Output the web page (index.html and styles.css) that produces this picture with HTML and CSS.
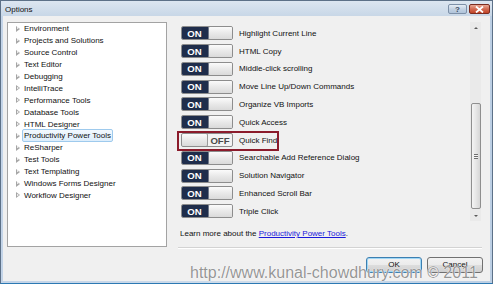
FILE: index.html
```html
<!DOCTYPE html>
<html lang="en">
<head>
  <meta charset="UTF-8" />
  <meta name="viewport" content="width=device-width, initial-scale=1.0">
  <title>Options</title>

  <link rel="stylesheet" href="styles.css">
</head>

<body>

  <div class="window">
    <div class="titlebar">
      <span class="title">Options</span>
      <div class="caption-buttons">
        <div class="cap-btn help">?</div>
        <div class="cap-btn close">
          <svg width="9" height="7" viewBox="0 0 9 7"><path d="M1 0.5 L8 6.5 M8 0.5 L1 6.5" stroke="#fff" stroke-width="1.8"/></svg>
        </div>
      </div>
    </div>

    <div class="client">
      <ul class="tree">
        <li><span class="arrow"></span><span class="node">Environment</span></li>
        <li><span class="arrow"></span><span class="node">Projects and Solutions</span></li>
        <li><span class="arrow"></span><span class="node">Source Control</span></li>
        <li><span class="arrow"></span><span class="node">Text Editor</span></li>
        <li><span class="arrow"></span><span class="node">Debugging</span></li>
        <li><span class="arrow"></span><span class="node">IntelliTrace</span></li>
        <li><span class="arrow"></span><span class="node">Performance Tools</span></li>
        <li><span class="arrow"></span><span class="node">Database Tools</span></li>
        <li><span class="arrow"></span><span class="node">HTML Designer</span></li>
        <li><span class="arrow"></span><span class="node selected">Productivity Power Tools</span></li>
        <li><span class="arrow"></span><span class="node">ReSharper</span></li>
        <li><span class="arrow"></span><span class="node">Test Tools</span></li>
        <li><span class="arrow"></span><span class="node">Text Templating</span></li>
        <li><span class="arrow"></span><span class="node">Windows Forms Designer</span></li>
        <li><span class="arrow"></span><span class="node">Workflow Designer</span></li>
      </ul>

      <div class="pane">
        <div class="settings">
          <ul class="toggles">
            <li class="row"><span class="switch on"><b>ON</b><i></i></span>Highlight Current Line</li>
            <li class="row"><span class="switch on"><b>ON</b><i></i></span>HTML Copy</li>
            <li class="row"><span class="switch on"><b>ON</b><i></i></span>Middle-click scrolling</li>
            <li class="row"><span class="switch on"><b>ON</b><i></i></span>Move Line Up/Down Commands</li>
            <li class="row"><span class="switch on"><b>ON</b><i></i></span>Organize VB Imports</li>
            <li class="row"><span class="switch on"><b>ON</b><i></i></span>Quick Access</li>
            <li class="row marked"><span class="switch off"><i></i><b>OFF</b></span>Quick Find</li>
            <li class="row"><span class="switch on"><b>ON</b><i></i></span>Searchable Add Reference Dialog</li>
            <li class="row"><span class="switch on"><b>ON</b><i></i></span>Solution Navigator</li>
            <li class="row"><span class="switch on"><b>ON</b><i></i></span>Enhanced Scroll Bar</li>
            <li class="row"><span class="switch on"><b>ON</b><i></i></span>Triple Click</li>
          </ul>

          <div class="scrollbar">
            <div class="sb-arrow up"></div>
            <div class="sb-track">
              <div class="sb-thumb"><span class="grip"></span></div>
            </div>
            <div class="sb-arrow down"></div>
          </div>
        </div>

        <p class="learn">Learn more about the <a href="#">Productivity Power Tools</a>.</p>

        <div class="separator"></div>

        <div class="buttons">
          <button class="btn default">OK</button>
          <button class="btn">Cancel</button>
        </div>
      </div>
    </div>

    <!-- watermark from the original screenshot -->
    <div class="watermark">http://www.kunal-chowdhury.com © 2011</div>
  </div>

</body>
</html>
```

FILE: styles.css
```css
body {
  margin: 0;
  padding: 0;
  width: 493px;
  height: 284px;
  overflow: hidden;
  background-color: #c5d5e7;
  font-family: "Liberation Sans", Arial, sans-serif;
  font-size: 8px;
  color: #111;
}

.window {
  position: relative;
  width: 493px;
  height: 284px;
  box-sizing: border-box;
  border: 1px solid #5d7188;
  border-bottom-color: #2c79b3;
  background: linear-gradient(to right, #c3d4e8, #cfdcea 50%, #bccfe4);
  display: flex;
  flex-direction: column;
}

/* title bar */

.titlebar {
  height: 15px;
  display: flex;
  align-items: center;
  justify-content: space-between;
  padding: 0 2px 0 4px;
  background: linear-gradient(#dce6f1, #c8d7e7);
}

.title {
  font-size: 8px;
  color: #111;
  padding-top: 1px;
}

.caption-buttons {
  display: flex;
  gap: 2px;
  align-self: flex-start;
  margin-top: 3px;
}

.cap-btn {
  width: 19px;
  height: 10px;
  box-sizing: border-box;
  border-radius: 2px;
  display: flex;
  align-items: center;
  justify-content: center;
  font-size: 8px;
  font-weight: bold;
}

.cap-btn.help {
  border: 1px solid #7d90a8;
  background: linear-gradient(#e5edf6, #c3d2e3 50%, #b0c4da);
  color: #3a4b60;
}

.cap-btn.close {
  width: 21px;
  border: 1px solid #7a2c20;
  background: linear-gradient(#e9a996, #d36b53 50%, #c24427);
}

/* client area */

.client {
  flex: 1;
  display: flex;
  align-items: flex-start;
  gap: 11px;
  margin: 0 2px 2px 2px;
  padding: 6px 8px 0 4px;
  background-color: #f0f0f0;
}

.tree {
  list-style: none;
  margin: 0;
  padding: 0;
  width: 160px;
  height: 225px;
  box-sizing: border-box;
  border: 1px solid #a3a3a3;
  background-color: white;
}

.tree li {
  height: 11.9px;
  display: flex;
  align-items: center;
  padding-left: 8px;
}

.arrow {
  width: 0;
  height: 0;
  border-top: 3px solid transparent;
  border-bottom: 3px solid transparent;
  border-left: 4px solid #a6a6a6;
  position: relative;
  margin-right: 2px;
}

.arrow::after {
  content: "";
  position: absolute;
  left: -3px;
  top: -1.5px;
  border-top: 1.5px solid transparent;
  border-bottom: 1.5px solid transparent;
  border-left: 2px solid white;
}

.node {
  padding: 1px 1px;
  border: 1px solid transparent;
  border-radius: 2px;
  line-height: 9px;
  white-space: nowrap;
}

.node.selected {
  border-color: #9ecaed;
  background: linear-gradient(#f3f9fe, #dcedfb);
}

/* right pane */

.pane {
  width: 304px;
  display: flex;
  flex-direction: column;
}

.settings {
  height: 199px;
  display: flex;
  justify-content: space-between;
}

.toggles {
  list-style: none;
  margin: 0;
  padding: 2.4px 0 0 3px;
}

.row {
  height: 17.8px;
  display: flex;
  align-items: center;
  gap: 6px;
  white-space: nowrap;
  position: relative;
}

.row.marked::after {
  content: "";
  position: absolute;
  left: -4px;
  top: -0.5px;
  width: 98px;
  height: 16px;
  border: 2px solid #8b1b2b;
}

.switch {
  width: 52px;
  height: 14px;
  box-sizing: border-box;
  display: flex;
  border: 1px solid #8d8d8d;
  border-radius: 2px;
  overflow: hidden;
  background-color: #f3f3f3;
}

.switch b {
  width: 25px;
  display: flex;
  align-items: center;
  justify-content: center;
  font-size: 9.6px;
  font-weight: bold;
}

.switch i {
  flex: 1;
  border-radius: 2px;
  border: 1px solid #9a9a9a;
  background: linear-gradient(#fbfbfb, #e9e9e9 50%, #dadada);
}

.switch.on b {
  background-color: #1f2d4b;
  color: white;
  padding-right: 1px;
}

.switch.on i {
  border-left-color: #6f7787;
  margin: -1px -1px -1px 0;
}

.switch.off b {
  color: #4a4a4a;
}

.switch.off i {
  margin: -1px 0 -1px -1px;
  flex: none;
  width: 25px;
}

/* scrollbar */

.scrollbar {
  width: 11px;
  display: flex;
  flex-direction: column;
  background-color: #eaeaea;
  margin-right: 1px;
}

.sb-arrow {
  height: 11px;
  display: flex;
  align-items: center;
  justify-content: center;
}

.sb-arrow::before {
  content: "";
  border-left: 2px solid transparent;
  border-right: 2px solid transparent;
}

.sb-arrow.up::before {
  border-bottom: 2px solid #5a5a5a;
}

.sb-arrow.down::before {
  border-top: 2px solid #5a5a5a;
}

.sb-track {
  flex: 1;
  display: flex;
  flex-direction: column;
  justify-content: flex-end;
  padding-bottom: 1px;
}

.sb-thumb {
  height: 106px;
  margin: 0 0.5px;
  box-sizing: border-box;
  border: 1px solid #8f8f8f;
  border-radius: 2px;
  background: linear-gradient(to right, #f4f4f4, #e6e6e6 50%, #d6d6d6);
  display: flex;
  align-items: center;
  justify-content: center;
}

.grip {
  width: 4px;
  height: 5px;
  background: repeating-linear-gradient(#6e6e6e 0 1px, #f4f4f4 1px 2px);
}

.learn {
  margin: 8px 0 0 2px;
  line-height: 10px;
  white-space: nowrap;
}

.learn a {
  color: #1a1adb;
  text-decoration: underline;
}

.separator {
  margin-top: 8px;
  height: 1px;
  border-bottom: 1px solid white;
  background-color: #d3d3d3;
}

.buttons {
  display: flex;
  justify-content: flex-end;
  gap: 5px;
  margin-top: 8px;
  margin-right: -1px;
}

.btn {
  width: 56px;
  height: 16px;
  padding: 0 0 2px;
  border: 1px solid #707070;
  border-radius: 3px;
  background: linear-gradient(#f2f2f2, #ebebeb 50%, #dddddd 51%, #cfcfcf);
  font-family: "Liberation Sans", Arial, sans-serif;
  font-size: 8px;
  color: #111;
}

.btn.default {
  border-color: #3c7fb1;
  box-shadow: inset 0 0 0 1px #9fd7f6;
}

/* overlay text */

.watermark {
  position: absolute;
  left: 189px;
  top: 264px;
  font-size: 16px;
  line-height: 16px;
  color: rgba(130, 130, 130, 0.85);
  text-shadow: 0 0 1px white, 0 0 1px white;
  white-space: nowrap;
}
```
